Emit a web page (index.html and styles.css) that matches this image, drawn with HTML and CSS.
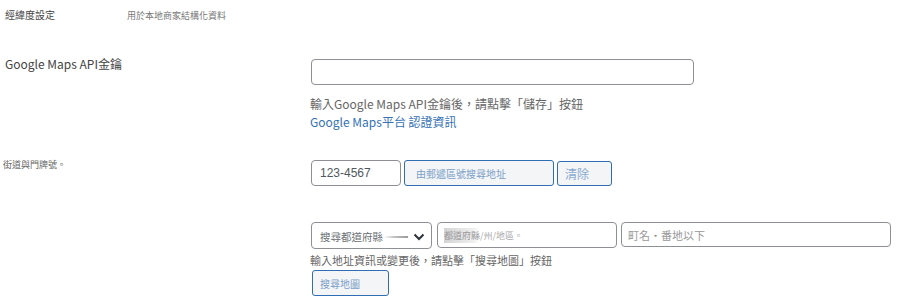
FILE: index.html
```html
<!DOCTYPE html>
<html lang="zh-Hant">
<head>
  <meta charset="UTF-8">
  <title>經緯度設定</title>
  <link rel="stylesheet" href="styles.css">
</head>
<body>
  <div class="settings">
    <!-- Section header -->
    <div class="head">
      <span class="head-title">經緯度設定</span>
      <span class="head-desc">用於本地商家結構化資料</span>
    </div>

    <!-- API key -->
    <div class="row row-api">
      <div class="label">Google Maps API金鑰</div>
      <div class="field">
        <input type="text" class="text-input api-input">
        <p class="help">輸入Google Maps API金鑰後，請點擊「儲存」按鈕</p>
        <a class="link" href="#">Google Maps平台 認證資訊</a>
      </div>
    </div>

    <!-- Postal code -->
    <div class="row row-zip">
      <div class="label small">街道與門牌號。</div>
      <div class="field inline">
        <input type="text" class="text-input zip-input" value="123-4567">
        <button class="btn btn-small">由郵遞區號搜尋地址</button>
        <button class="btn btn-clear">清除</button>
      </div>
    </div>

    <!-- Address -->
    <div class="row row-addr">
      <div class="label"></div>
      <div class="field">
        <div class="inline">
          <div class="select">
            <span class="select-text">搜尋都道府縣</span>
            <span class="select-line"></span>
            <svg class="chevron" width="12" height="8" viewBox="0 0 12 8"><path d="M1.5 1.5 6 6l4.5-4.5" fill="none" stroke="#2c3338" stroke-width="2"/></svg>
          </div>
          <div class="text-input fake-input pref-input"><span class="ph-mark">都道府縣</span><span class="ph">/州/地區。</span></div>
          <div class="text-input fake-input town-input"><span class="ph-town">町名・番地以下</span></div>
        </div>
        <p class="help help-addr">輸入地址資訊或變更後，請點擊「搜尋地圖」按鈕</p>
        <button class="btn btn-small btn-map">搜尋地圖</button>
      </div>
    </div>
  </div>
</body>
</html>
```

FILE: styles.css
```css
/* General */
body {
  margin: 0;
  background: #fff;
  font-family: "Noto Sans CJK TC", "Noto Sans", sans-serif;
  color: #444;
}

.settings {
  width: 900px;
}

/* Header row */
.head {
  display: flex;
  align-items: center;
  height: 14px;
  padding: 8px 5px;
}

.head-title {
  width: 122px;
  font-size: 10px;
  line-height: 14px;
  color: #444;
}

.head-desc {
  font-size: 9px;
  color: #777;
}

/* Form rows */
.row {
  display: grid;
  grid-template-columns: 306px 1fr;
  padding-left: 5px;
}

.row-api {
  margin-top: 29px;
}

.row-zip {
  margin-top: 29px;
}

.row-addr {
  margin-top: 36px;
}

.label {
  font-size: 12px;
  line-height: 14px;
  margin-top: -2px;
  color: #444;
}

.label.small {
  font-size: 9px;
  margin-top: -2px;
  margin-left: -2px;
  color: #666;
}

.field {
  display: flex;
  flex-direction: column;
  align-items: flex-start;
}

.inline {
  display: flex;
  flex-direction: row;
  align-items: flex-start;
}

/* Inputs */
.text-input {
  box-sizing: border-box;
  height: 26px;
  border: 1px solid #8c8f94;
  border-radius: 4px;
  background: #fff;
  font-family: inherit;
  padding: 0 8px;
  margin: 0;
}

.api-input {
  width: 383px;
}

.zip-input {
  width: 90px;
  font-size: 12px;
  color: #50575e;
  font-family: "Liberation Sans", sans-serif;
}

.fake-input {
  display: flex;
  align-items: center;
  font-size: 9px;
  color: #aaa;
}

.pref-input {
  width: 180px;
  margin-left: 5px;
  padding: 0 6px;
}

.ph-mark {
  background: linear-gradient(to right, #d4d4d4, #eee 80%, #fff);
  color: #999;
  padding: 1px 0;
}

.ph {
  color: #aaa;
}

.town-input {
  width: 270px;
  height: 25px;
  margin-left: 4px;
  padding: 0 6px;
}

.ph-town {
  font-size: 11px;
  color: #999;
}

/* Select */
.select {
  box-sizing: border-box;
  width: 121px;
  height: 27px;
  display: flex;
  align-items: center;
  border: 1px solid #8c8f94;
  border-radius: 4px;
  padding: 2px 6px 0 8px;
  font-size: 10.5px;
  color: #6b7075;
  white-space: nowrap;
}

.select-text {
  flex-shrink: 0;
}

.select-line {
  flex-shrink: 0;
  width: 24px;
  height: 2px;
  margin-left: 1px;
  background: linear-gradient(to right, #fff, #c4c4c4 40%, #999);
}

.chevron {
  flex-shrink: 0;
  margin-left: auto;
}

/* Buttons */
.btn {
  box-sizing: border-box;
  height: 26px;
  border: 1px solid #2f6db4;
  border-radius: 3px;
  background: #f4f5f6;
  color: #7b9fc9;
  font-family: inherit;
  padding: 0 7px;
  margin: 0;
}

.btn-small {
  font-size: 10px;
  width: 150px;
  text-align: left;
  margin-left: 3px;
  padding-left: 11px;
}

.btn-clear {
  width: 55px;
  height: 25px;
  margin-top: 1px;
  margin-left: 3px;
  font-size: 12px;
  text-align: left;
  color: #8aabd2;
}

.btn-map {
  width: 77px;
  margin-left: 1px;
  margin-top: 2px;
  padding-left: 7px;
}

/* Help text */
.help {
  margin: 10px 0 0 -1px;
  font-size: 12px;
  line-height: 18px;
  color: #666;
}

.help-addr {
  margin-top: 3px;
  font-size: 11px;
  line-height: 16px;
}

.link {
  margin-left: -1px;
  font-size: 12px;
  line-height: 18px;
  color: #3572b4;
  text-decoration: none;
}
```
